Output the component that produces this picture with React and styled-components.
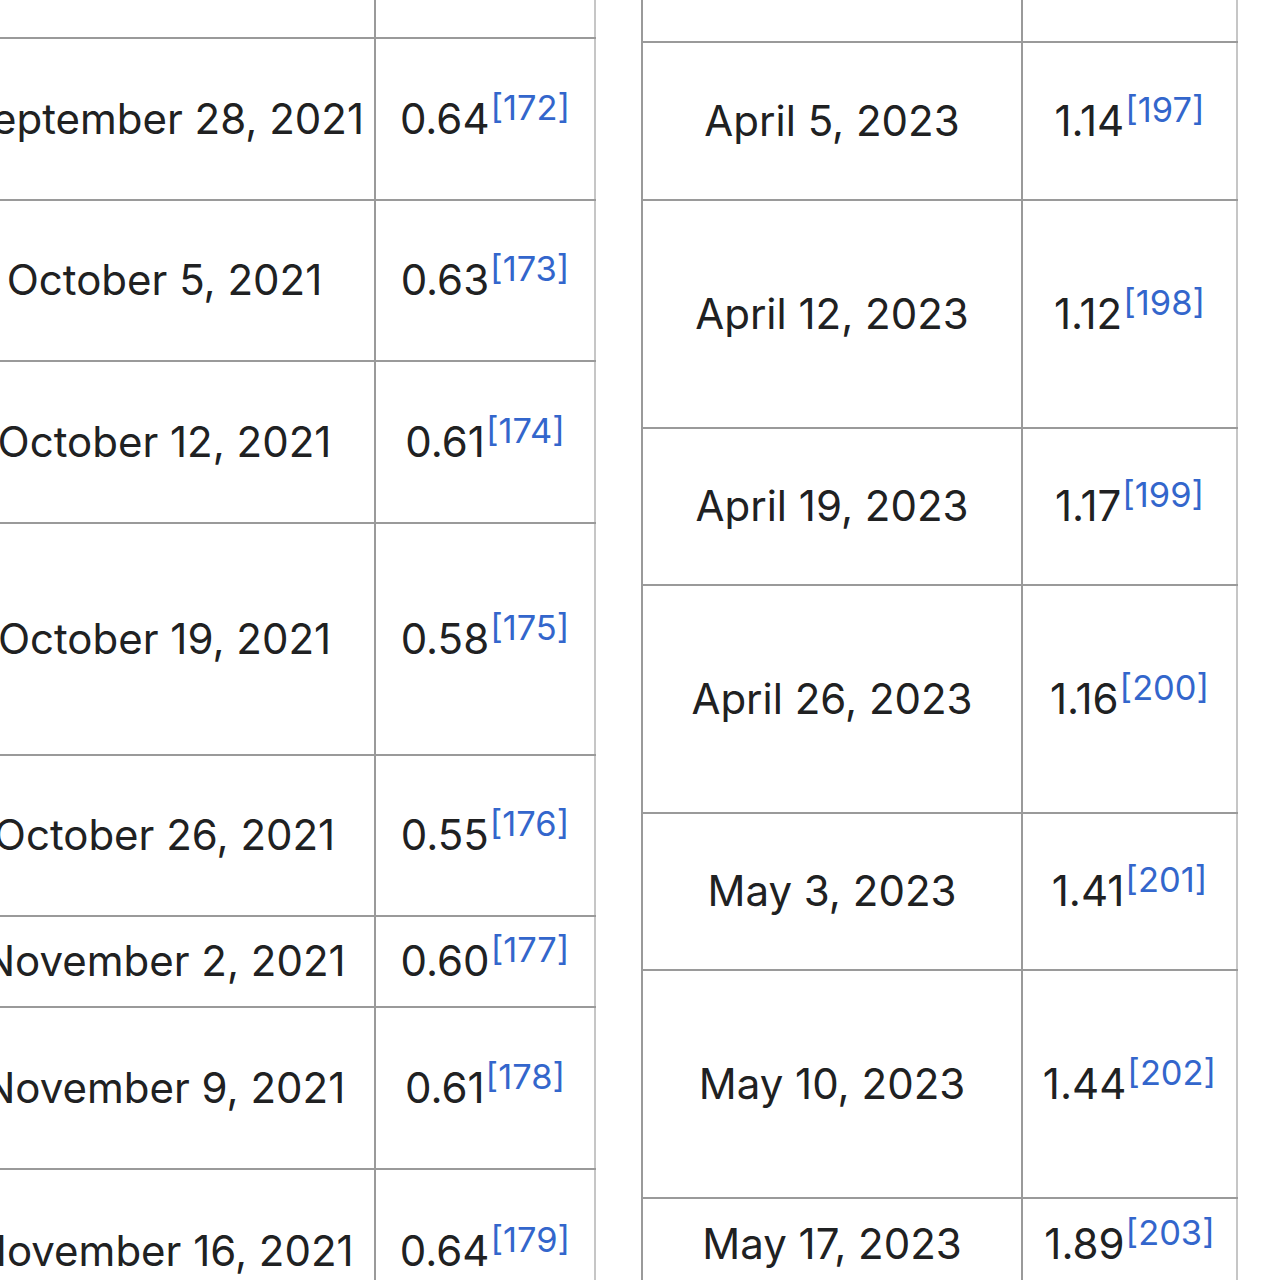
import styled, { createGlobalStyle } from 'styled-components';

const GlobalStyle = createGlobalStyle`
  html, body {
    margin: 0;
    padding: 0;
    background: #ffffff;
    overflow: hidden;
  }
  body {
    font-family: Inter, "Noto Sans", "Liberation Sans", sans-serif;
    color: #202122;
  }
`;

const leftRows = [
  { h: 39 },
  { h: 162, date: 'September 28, 2021', value: '0.64', ref: 172 },
  { h: 161, date: 'October 5, 2021', value: '0.63', ref: 173 },
  { h: 162, date: 'October 12, 2021', value: '0.61', ref: 174 },
  { h: 232, date: 'October 19, 2021', value: '0.58', ref: 175 },
  { h: 161, date: 'October 26, 2021', value: '0.55', ref: 176 },
  { h: 91, date: 'November 2, 2021', value: '0.60', ref: 177 },
  { h: 162, date: 'November 9, 2021', value: '0.61', ref: 178 },
  { h: 164, date: 'November 16, 2021', value: '0.64', ref: 179 },
];

const rightRows = [
  { h: 43 },
  { h: 158, date: 'April 5, 2023', value: '1.14', ref: 197 },
  { h: 228, date: 'April 12, 2023', value: '1.12', ref: 198 },
  { h: 157, date: 'April 19, 2023', value: '1.17', ref: 199 },
  { h: 228, date: 'April 26, 2023', value: '1.16', ref: 200 },
  { h: 157, date: 'May 3, 2023', value: '1.41', ref: 201 },
  { h: 228, date: 'May 10, 2023', value: '1.44', ref: 202 },
  { h: 92, date: 'May 17, 2023', value: '1.89', ref: 203 },
];

const PriceTable = ({ rows, cols, edge }) => (
  <Table role="table" $edge={edge}>
    {rows.map((row, i) => (
      <Row role="row" key={i} $h={row.h} $cols={cols}>
        <Cell role="cell">{row.date}</Cell>
        <Cell role="cell" $last>
          {row.value && (
            <>
              {row.value}
              <Ref href="#">[{row.ref}]</Ref>
            </>
          )}
        </Cell>
      </Row>
    ))}
  </Table>
);

export default function App() {
  return (
    <>
      <GlobalStyle />
      <Scroller>
        <PriceTable rows={leftRows} cols="421px 220px" />
        <PriceTable rows={rightRows} cols="380px 215px" edge />
      </Scroller>
    </>
  );
}

const Scroller = styled.div`
  display: flex;
  align-items: flex-start;
  gap: 45px;
  margin-left: -45px;
  height: 1280px;
  overflow: hidden;
`;

const Table = styled.div`
  display: flex;
  flex-direction: column;
  flex-shrink: 0;
  border-left: ${({ $edge }) => ($edge ? '2px solid #9a9a9a' : 'none')};
`;

const Row = styled.div`
  display: grid;
  grid-template-columns: ${({ $cols }) => $cols};
  height: ${({ $h }) => $h}px;
  box-sizing: border-box;
  border-bottom: 2px solid #9a9a9a;
`;

const Cell = styled.div`
  display: flex;
  align-items: center;
  justify-content: center;
  box-sizing: border-box;
  border-right: 2px solid ${({ $last }) => ($last ? '#c6c6c6' : '#9a9a9a')};
  font-size: 42px;
  white-space: nowrap;
  line-height: 1.2;
`;

const Ref = styled.a`
  color: #3366cc;
  text-decoration: none;
  font-size: 0.82em;
  line-height: 1;
  margin-left: 1px;
  position: relative;
  top: -11px;
`;
